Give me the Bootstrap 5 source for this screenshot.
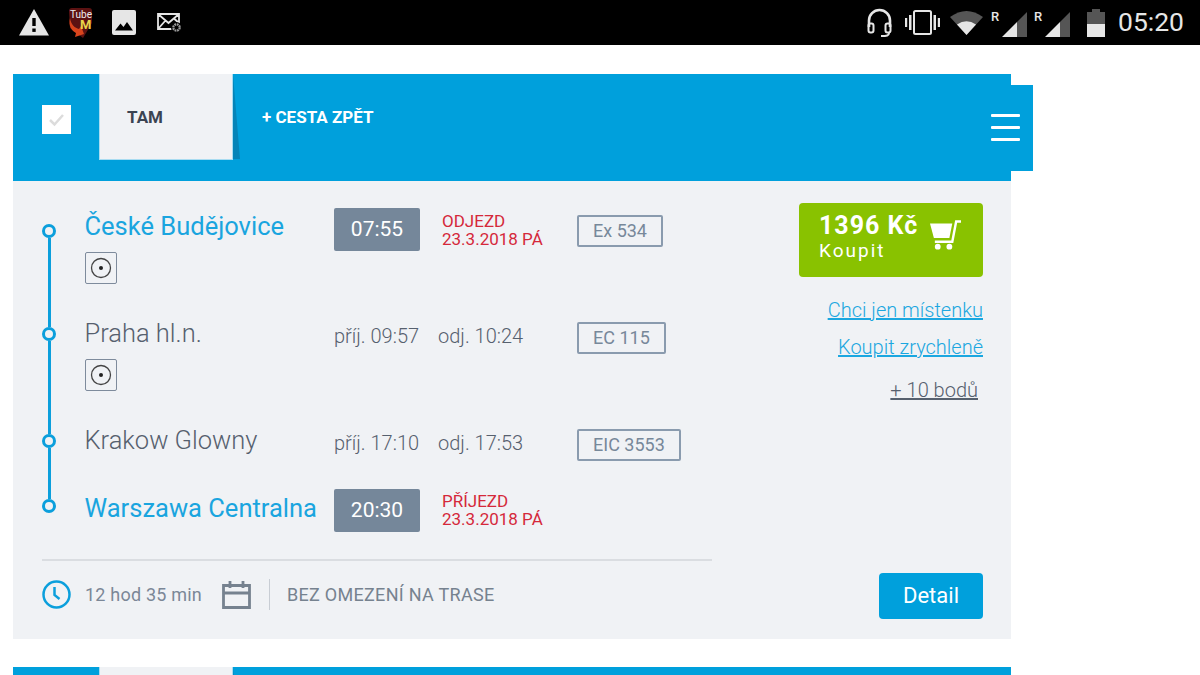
<!DOCTYPE html>
<html lang="cs">

<head>
    <meta charset="UTF-8">
    <meta name="viewport" content="width=device-width, initial-scale=1">
    <title>Spojení</title>
    <link href="https://cdn.jsdelivr.net/npm/bootstrap@5.3.3/dist/css/bootstrap.min.css" rel="stylesheet">
    <style>
        html, body {
            height: 675px;
            overflow: hidden;
        }

        body {
            font-family: Roboto, "Liberation Sans", sans-serif;
            background: #fff;
        }

        .status-bar {
            height: 45px;
            background: #000;
            color: #e6e6e6;
            padding: 0 16px 0 19px;
        }

        .status-time {
            font-size: 26.500px;
            line-height: 1;
            margin-left: 13px;
        }

        .sm-6 { margin-left: 6px; }
        .sm-8 { margin-left: 8px; }
        .sm-10 { margin-left: 10px; }
        .sm-13 { margin-left: 13px; }
        .sm-16 { margin-left: 16px; }
        .sm-19 { margin-left: 19px; }
        .sm-21 { margin-left: 21px; }

        .page-wrap {
            padding: 29px 0 0 13px;
        }

        .conn-block {
            width: 998px;
            margin-bottom: 28px;
        }

        .conn-head {
            height: 107px;
            background: #00a0dc;
            color: #fff;
        }

        .head-check {
            width: 29px;
            height: 29px;
            margin: 31px 28px 0 29px;
            background: #fff;
        }

        .head-tab {
            width: 134px;
            height: 86px;
            background: #f0f2f5;
            border: 1px solid #a9dcf1;
            border-top: 0;
            color: #3b4452;
            font-size: 17px;
            font-weight: 700;
            padding: 33px 0 0 27px;
            line-height: 20px;
        }

        .head-tab::after {
            content: "";
            position: absolute;
            left: 133px;
            top: 0;
            bottom: 0;
            width: 7px;
            background: #0584b8;
            clip-path: polygon(0 0, 100% 100%, 0 100%);
        }

        .head-return {
            font-size: 17px;
            font-weight: 700;
            margin: 33px 0 0 29px;
            line-height: 20px;
        }

        .menu-tab {
            position: absolute;
            right: -22px;
            top: 11px;
            width: 44px;
            height: 86px;
            background: #00a0dc;
            padding: 29px 0 0 2px;
            gap: 9px;
        }

        .menu-line {
            width: 29px;
            height: 3px;
            background: #fff;
            border-radius: 1px;
        }

        .conn-body {
            height: 458px;
            background: #f0f2f5;
            padding: 22px 28px 20px 29px;
        }

        .route-col {
            width: 670px;
        }

        .stop-row {
            height: 107px;
        }

        .stop-third {
            height: 68px;
        }

        .stop-last {
            height: 68px;
        }

        .stop-rail {
            width: 42.500px;
            flex: none;
        }

        .stop-dot {
            position: absolute;
            left: 0;
            top: 17px;
            width: 14px;
            height: 14px;
            border: 3px solid #0b9fdc;
            border-radius: 50%;
            background: #f0f2f5;
            z-index: 1;
        }

        .stop-line {
            position: absolute;
            left: 6px;
            top: 31px;
            bottom: -17px;
            width: 3px;
            background: #0b9fdc;
        }

        .stop-first .stop-dot {
            top: 21px;
        }

        .stop-first .stop-line {
            top: 35px;
        }

        .stop-third .stop-line {
            bottom: -14px;
        }

        .stop-last .stop-dot {
            top: 14px;
        }

        .stop-name {
            width: 249.500px;
            flex: none;
            font-size: 25.500px;
            line-height: 30px;
            padding-top: 8px;
            color: #56606e;
            font-weight: 300;
        }

        .stop-name.is-end {
            color: #1aa5df;
            font-weight: 400;
        }

        .wheel-box {
            display: flex;
            align-items: center;
            justify-content: center;
            width: 32px;
            height: 32px;
            margin-top: 11px;
            border: 1.500px solid #7e8b9c;
            border-radius: 2px;
        }

        .time-chip {
            width: 86px;
            height: 43px;
            margin-top: 4px;
            background: #75879a;
            color: #fff;
            font-size: 21px;
            line-height: 43px;
            text-align: center;
            border-radius: 2px;
        }

        .stop-first .time-chip {
            margin-top: 5px;
        }

        .time-note {
            margin: 8px 0 0 22px;
            width: 135px;
            color: #d5283a;
            font-size: 17px;
            line-height: 17.500px;
        }

        .stop-first .time-note {
            margin-top: 10px;
        }

        .time-plain {
            width: 243px;
            flex: none;
            padding-top: 14px;
            color: #56606e;
            font-size: 20px;
            font-weight: 300;
            line-height: 24px;
        }

        .time-arr {
            width: 104px;
        }

        .train-tag {
            display: inline-block;
            height: 32px;
            margin-top: 12px;
            padding: 0 14px;
            border: 2px solid #8a9bae;
            border-radius: 2px;
            color: #77889a;
            font-size: 18px;
            line-height: 28px;
        }

        .route-sep {
            width: 670px;
            height: 2px;
            background: #dadde1;
            margin-top: 6px;
        }

        .foot-row {
            height: 66px;
            color: #7b8797;
            font-size: 18px;
        }

        .foot-time {
            margin-left: 14px;
            margin-right: 20px;
            letter-spacing: .2px;
        }

        .foot-rule {
            width: 1px;
            height: 31px;
            background: #c8cdd4;
            margin: 0 17px 0 18px;
        }

        .foot-limit {
            color: #76828f;
            letter-spacing: .3px;
        }

        .side-col {
            width: 184px;
        }

        .buy-btn {
            width: 184px;
            height: 74px;
            background: #89c200;
            color: #fff;
            border-radius: 4px;
            padding: 8px 22px 8px 20px;
            border: 0;
        }

        .buy-price {
            font-size: 25px;
            font-weight: 700;
            line-height: 30px;
            letter-spacing: 1px;
        }

        .buy-label {
            font-size: 19px;
            line-height: 20px;
            letter-spacing: 2px;
        }

        .side-link {
            color: #1ba7e0;
            font-size: 20px;
            line-height: 24px;
            text-decoration: underline;
            font-weight: 300;
        }

        .link-one {
            margin-top: 21px;
        }

        .link-two {
            margin-top: 13px;
        }

        .side-points {
            color: #56606e;
            font-size: 20px;
            line-height: 24px;
            text-decoration: underline;
            font-weight: 300;
            margin: 19px 5px 0 0;
        }

        .detail-btn {
            width: 104px;
            height: 46px;
            background: #00a0dc;
            color: #fff;
            font-size: 22px;
            line-height: 46px;
            padding: 0;
            border: 0;
            border-radius: 4px;
        }

        .detail-btn:hover {
            background: #00a0dc;
            color: #fff;
        }
    </style>
</head>

<body>
    <div class="status-bar d-flex align-items-center">
        <svg width="30" height="27" viewBox="0 0 30 27"><path fill="#e6e6e6" d="M15 0 30 26.500H0Z"/><rect x="13.300" y="9" width="3.400" height="8" fill="#000"/><rect x="13.300" y="19.500" width="3.400" height="3.400" fill="#000"/></svg>
        <svg class="sm-19" width="25" height="30" viewBox="0 0 25 30"><path fill="#5c1212" d="M1 3q0-3 3-3h17q3 0 3 3v12l-9 15L2 20Z"/><path fill="#d8441c" d="M2 10c1 7 5 10 9 11l2-3 3 8-9 3 1-4C4 23 0 18 2 10Z"/><text x="2" y="10" font-size="10" font-family="Roboto" fill="#eee">Tube</text><text x="12" y="21" font-size="13" font-weight="700" font-family="Roboto" fill="#e8d44a">M</text></svg>
        <svg class="sm-19" width="24" height="25" viewBox="0 0 24 25"><rect width="24" height="25" rx="2" fill="#e6e6e6"/><path fill="#000" d="M3 20.500 8.500 13.500l3 3.500 3.500-5 6 8.500Z"/></svg>
        <svg class="sm-21" width="25" height="20" viewBox="0 0 25 20"><path fill="none" stroke="#e6e6e6" stroke-width="1.800" d="M1 1h21v15H1ZM1 1l10.500 9L22 1M1 16l7.500-8.500M22 10l-4.500-4"/><circle cx="19.500" cy="14.500" r="5.500" fill="#000"/><circle cx="19.500" cy="14.500" r="3.200" fill="none" stroke="#999" stroke-width="2.200" stroke-dasharray="1.800 .7"/></svg>
        <div class="ms-auto d-flex align-items-center">
            <svg width="25" height="30" viewBox="0 0 25 30"><path fill="none" stroke="#e6e6e6" stroke-width="2.600" d="M2 19V12.500a10.500 10.500 0 0 1 21 0V19"/><rect x="1.500" y="15.500" width="5" height="9" rx="2" fill="none" stroke="#e6e6e6" stroke-width="2"/><rect x="18.500" y="15.500" width="5" height="9" rx="2" fill="none" stroke="#e6e6e6" stroke-width="2"/><path fill="none" stroke="#e6e6e6" stroke-width="2" d="M22 25c0 2.500-2 3-8 3"/></svg>
            <svg class="sm-13" width="35" height="25" viewBox="0 0 35 25"><rect x="9" y="1" width="17" height="23" rx="1.500" fill="none" stroke="#e6e6e6" stroke-width="2"/><rect x="4" y="5" width="2.500" height="15" fill="#e6e6e6"/><rect x="28.500" y="5" width="2.500" height="15" fill="#e6e6e6"/><rect x="0" y="8" width="2.200" height="9" fill="#e6e6e6"/><rect x="32.800" y="8" width="2.200" height="9" fill="#e6e6e6"/></svg>
            <svg class="sm-10" width="33" height="25" viewBox="0 0 33 25"><path fill="#555" d="M0 7Q16.500-5 33 7L16.500 25Z"/><path fill="#e6e6e6" d="M7 14.500Q16.500 8 26 14.500L16.500 25Z"/></svg>
            <svg class="sm-8" width="37" height="28" viewBox="0 0 37 28"><text x="0" y="12" font-size="13" font-weight="500" font-family="Roboto" fill="#e6e6e6">R</text><path fill="#555" d="M26 28V13L36 3V28Z"/><path fill="#e6e6e6" d="M11 28 26 13V28Z"/></svg>
            <svg class="sm-6" width="37" height="28" viewBox="0 0 37 28"><text x="0" y="12" font-size="13" font-weight="500" font-family="Roboto" fill="#e6e6e6">R</text><path fill="#555" d="M26 28V13L36 3V28Z"/><path fill="#e6e6e6" d="M11 28 26 13V28Z"/></svg>
            <svg class="sm-16" width="18" height="28" viewBox="0 0 18 28"><rect y="3" width="18" height="12" fill="#555"/><rect x="5" width="8" height="3" fill="#555"/><rect y="15" width="18" height="13" fill="#e6e6e6"/></svg>
            <span class="status-time">05:20</span>
        </div>
    </div>

    <div class="page-wrap">
        <div class="conn-block">
            <div class="conn-head d-flex position-relative">
                <div class="head-check d-flex align-items-center justify-content-center">
                    <svg width="17" height="14" viewBox="0 0 17 14"><path fill="none" stroke="#dcdcdc" stroke-width="2.500" d="M2 7l4.500 4.500L15 2"/></svg>
                </div>
                <div class="head-tab position-relative">TAM</div>
                <div class="head-return">+ CESTA ZPĚT</div>
                <div class="menu-tab d-flex flex-column">
                    <div class="menu-line"></div>
                    <div class="menu-line"></div>
                    <div class="menu-line"></div>
                </div>
            </div>
            <div class="conn-body d-flex justify-content-between">
                <div class="route-col">
                    <div class="stop-row stop-first d-flex">
                        <div class="stop-rail position-relative"><span class="stop-dot"></span><span class="stop-line"></span></div>
                        <div class="stop-name is-end">České Budějovice
                            <span class="wheel-box"><svg width="22" height="22" viewBox="0 0 22 22"><circle cx="11" cy="11" r="9.500" fill="none" stroke="#444" stroke-width="1.300"/><circle cx="11" cy="11" r="2" fill="#222"/></svg></span>
                        </div>
                        <div class="time-chip">07:55</div>
                        <div class="time-note">ODJEZD<br>23.3.2018 PÁ</div>
                        <div><span class="train-tag">Ex 534</span></div>
                    </div>
                    <div class="stop-row d-flex">
                        <div class="stop-rail position-relative"><span class="stop-dot"></span><span class="stop-line"></span></div>
                        <div class="stop-name">Praha hl.n.
                            <span class="wheel-box"><svg width="22" height="22" viewBox="0 0 22 22"><circle cx="11" cy="11" r="9.500" fill="none" stroke="#444" stroke-width="1.300"/><circle cx="11" cy="11" r="2" fill="#222"/></svg></span>
                        </div>
                        <div class="time-plain d-flex"><span class="time-arr">příj. 09:57</span><span>odj. 10:24</span></div>
                        <div><span class="train-tag">EC 115</span></div>
                    </div>
                    <div class="stop-row stop-third d-flex">
                        <div class="stop-rail position-relative"><span class="stop-dot"></span><span class="stop-line"></span></div>
                        <div class="stop-name">Krakow Glowny</div>
                        <div class="time-plain d-flex"><span class="time-arr">příj. 17:10</span><span>odj. 17:53</span></div>
                        <div><span class="train-tag">EIC 3553</span></div>
                    </div>
                    <div class="stop-row stop-last d-flex">
                        <div class="stop-rail position-relative"><span class="stop-dot"></span></div>
                        <div class="stop-name is-end">Warszawa Centralna</div>
                        <div class="time-chip">20:30</div>
                        <div class="time-note">PŘÍJEZD<br>23.3.2018 PÁ</div>
                    </div>
                    <div class="route-sep"></div>
                    <div class="foot-row d-flex align-items-center">
                        <svg width="29" height="29" viewBox="0 0 29 29"><circle cx="14.500" cy="14.500" r="13" fill="none" stroke="#0b9fdc" stroke-width="2.500"/><path fill="none" stroke="#0b9fdc" stroke-width="2.500" d="M12.500 7v8l5 4"/></svg>
                        <span class="foot-time">12 hod 35 min</span>
                        <svg width="29" height="29" viewBox="0 0 29 29"><path fill="none" stroke="#76828f" stroke-width="2.800" d="M1.500 5.500h26v22h-26ZM1.500 13h26M8 1v7M21 1v7"/></svg>
                        <div class="foot-rule"></div>
                        <span class="foot-limit">BEZ OMEZENÍ NA TRASE</span>
                    </div>
                </div>
                <div class="side-col d-flex flex-column align-items-end">
                    <div class="buy-btn d-flex justify-content-between">
                        <div>
                            <div class="buy-price">1396 Kč</div>
                            <div class="buy-label">Koupit</div>
                        </div>
                        <svg class="mt-2" width="31" height="32" viewBox="0 0 32 32"><path fill="#fff" d="M0 4h23l-3 15H4Z"/><path fill="none" stroke="#fff" stroke-width="2.500" d="M32 2h-5l-4 21H5"/><circle cx="8" cy="28" r="3" fill="#fff"/><circle cx="20" cy="28" r="3" fill="#fff"/></svg>
                    </div>
                    <a class="side-link link-one" href="#">Chci jen místenku</a>
                    <a class="side-link link-two" href="#">Koupit zrychleně</a>
                    <span class="side-points">+ 10 bodů</span>
                    <button class="btn detail-btn mt-auto">Detail</button>
                </div>
            </div>
        </div>
        <div class="conn-block">
            <div class="conn-head d-flex position-relative">
                <div class="head-check"></div>
                <div class="head-tab position-relative"></div>
            </div>
        </div>
    </div>
    <script src="https://cdn.jsdelivr.net/npm/bootstrap@5.3.3/dist/js/bootstrap.bundle.min.js"></script>
</body>

</html>
